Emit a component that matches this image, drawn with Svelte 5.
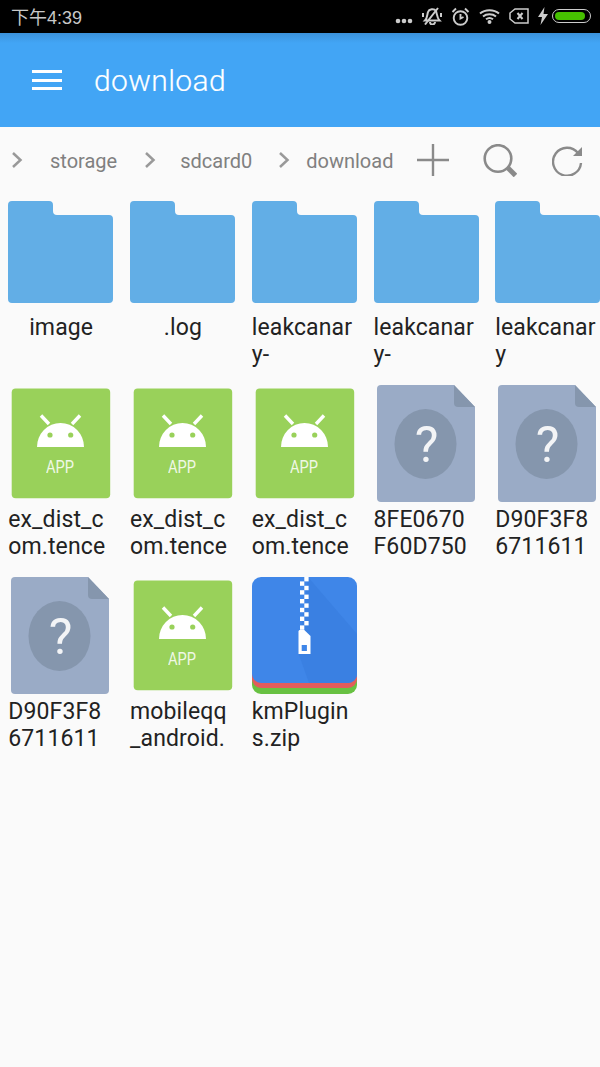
<script>
	const files = [
		{ type: 'folder', lines: ['image'] },
		{ type: 'folder', lines: ['.log'] },
		{ type: 'folder', lines: ['leakcanar', 'y-'] },
		{ type: 'folder', lines: ['leakcanar', 'y-'] },
		{ type: 'folder', lines: ['leakcanar', 'y'] },
		{ type: 'app', lines: ['ex_dist_c', 'om.tence'] },
		{ type: 'app', lines: ['ex_dist_c', 'om.tence'] },
		{ type: 'app', lines: ['ex_dist_c', 'om.tence'] },
		{ type: 'unknown', lines: ['8FE0670', 'F60D750'] },
		{ type: 'unknown', lines: ['D90F3F8', '6711611'] },
		{ type: 'unknown', lines: ['D90F3F8', '6711611'] },
		{ type: 'app', lines: ['mobileqq', '_android.'] },
		{ type: 'zip', lines: ['kmPlugin', 's.zip'] }
	];

	// zipper teeth, alternating right/left
	const teeth = Array.from({ length: 12 }, (_, i) => i);
</script>

{#snippet folderIcon()}
	<svg class="icon" viewBox="0 0 106 120">
		<path
			d="M4 9H41a4 4 0 0 1 4 4V19a4 4 0 0 0 4 4H101a4 4 0 0 1 4 4V107a4 4 0 0 1-4 4H4a4 4 0 0 1-4-4V13a4 4 0 0 1 4-4Z"
			fill="#62aee6"
		/>
	</svg>
{/snippet}

{#snippet appIcon()}
	<svg class="icon" viewBox="0 0 106 120">
		<rect x="3.7" y="4.6" width="98.5" height="109.6" rx="4" fill="#99d15a" />
		<path d="M29 63a23.500 24 0 0 1 47 0Z" fill="#fff" />
		<path d="M33 31.500L41 40M72 31.500L64 40" stroke="#fff" stroke-width="3.400" />
		<circle cx="42" cy="51" r="2.600" fill="#99d15a" />
		<circle cx="62.700" cy="51" r="2.600" fill="#99d15a" />
		<text x="52" y="88.500" class="app-text" textLength="28" lengthAdjust="spacingAndGlyphs">APP</text>
	</svg>
{/snippet}

{#snippet unknownIcon()}
	<svg class="icon" viewBox="0 0 106 120">
		<path d="M7 1H80L101 23V114a4 4 0 0 1-4 4H7a4 4 0 0 1-4-4V5a4 4 0 0 1 4-4Z" fill="#9aabc6" />
		<path d="M80 1L101 23H84a4 4 0 0 1-4-4Z" fill="#8596ad" />
		<ellipse cx="51.500" cy="60" rx="31" ry="35" fill="#8596ad" />
		<text x="52.500" y="77.500" class="question">?</text>
	</svg>
{/snippet}

{#snippet zipIcon()}
	<svg class="icon" viewBox="0 0 106 120">
		<path d="M0 20H105V109a9 9 0 0 1-9 9H9a9 9 0 0 1-9-9Z" fill="#68c142" />
		<path d="M0 20H105V103a9 9 0 0 1-9 9H9a9 9 0 0 1-9-9Z" fill="#e25c5c" />
		<path d="M9 1H96a9 9 0 0 1 9 9V98a9 9 0 0 1-9 9H9a9 9 0 0 1-9-9V10A9 9 0 0 1 9 1Z" fill="#3f86e8" />
		<path d="M56 1L105 58V98a9 9 0 0 1-9 9H57L46 76Z" fill="#3a80e2" />
		{#each teeth as i}
			<rect x={i % 2 ? 48 : 52.300} y={1 + i * 4.400} width="4.300" height="4.400" fill="#fff" />
		{/each}
		<path d="M47.500 54H52.300L58.500 60V78H46.500V55Z" fill="#fff" />
		<rect x="49.700" y="69" width="5.200" height="6" fill="#3f86e8" />
	</svg>
{/snippet}

{#snippet chevron()}
	<svg class="chevron" viewBox="0 0 12 18">
		<path d="M2 2L9.500 9L2 16" fill="none" stroke="#999" stroke-width="2.500" />
	</svg>
{/snippet}

<div class="screen">
	<header class="status">
		<span class="time">下午4:39</span>
		<div class="status-icons">
			<svg class="dots" width="18" height="6" viewBox="0 0 18 6">
				<circle cx="3" cy="3" r="2.300" fill="#ccc" />
				<circle cx="9" cy="3" r="2.300" fill="#ccc" />
				<circle cx="15" cy="3" r="2.300" fill="#ccc" />
			</svg>
			<svg width="20" height="18" viewBox="0 0 20 18" fill="none" stroke="#ccc" stroke-width="2">
				<path d="M3 13.500C5.500 11 5 8 6 5C7 2 12 1 14 4C15 7 15 11 17.500 13.500Z" />
				<path d="M8 15a2.500 2.500 0 0 0 5 0M3 17.500L16 1M1 6V10M19 6V10" />
			</svg>
			<svg width="19" height="19" viewBox="0 0 19 19" fill="none" stroke="#ccc" stroke-width="1.900">
				<circle cx="9.500" cy="11" r="6.800" />
				<path d="M9.500 7V11.500L12.500 10M1.500 5L5 1.500M17.500 5L14 1.500" />
			</svg>
			<svg width="21" height="16" viewBox="0 0 21 16" fill="none" stroke="#ccc" stroke-width="2">
				<path d="M1 5.500C6 1 15 1 20 5.500M4 8.500C7.500 5.500 13.500 5.500 17 8.500M7 11.300C9 9.800 12 9.800 14 11.300" />
				<circle cx="10.500" cy="14" r="1" fill="#ccc" />
			</svg>
			<svg width="20" height="16" viewBox="0 0 20 16" fill="none" stroke="#ccc" stroke-width="1.500">
				<path d="M6 1H19V15H6L1 11V5Z" />
				<path d="M8.500 5L13.500 11M13.500 5L8.500 11" stroke-width="2" />
			</svg>
			<svg width="10" height="18" viewBox="0 0 10 18">
				<path d="M6.500 0L0 10H4L2.500 18L10 7H5.500Z" fill="#ccc" />
			</svg>
			<div class="battery"><div class="battery-fill"></div></div>
		</div>
	</header>

	<div class="toolbar">
		<div class="menu"><span></span><span></span><span></span></div>
		<h1>download</h1>
	</div>

	<nav class="crumbs">
		<span class="first">{@render chevron()}</span>
		<span class="crumb storage">storage</span>
		{@render chevron()}
		<span class="crumb sdcard">sdcard0</span>
		{@render chevron()}
		<span class="crumb current">download</span>
		<svg class="plus" width="32" height="32" viewBox="0 0 32 32">
			<path d="M0 16H32M16 0V32" stroke="#8a8a8a" stroke-width="2.400" />
		</svg>
		<svg class="search" width="34" height="33" viewBox="0 0 34 33" fill="none" stroke="#8a8a8a">
			<circle cx="15" cy="14.500" r="13.300" stroke-width="2.600" />
			<path d="M25 24L32.500 31.500" stroke-width="5" />
		</svg>
		<svg class="refresh" width="32" height="31" viewBox="0 0 32 31" fill="none">
			<path d="M26 8A14 14 0 1 0 29 18" stroke="#8a8a8a" stroke-width="2.400" />
			<path d="M30 2V11H21Z" fill="#8a8a8a" />
		</svg>
	</nav>

	<main class="grid">
		{#each files as file}
			<div class="item">
				{#if file.type === 'folder'}
					{@render folderIcon()}
				{:else if file.type === 'app'}
					{@render appIcon()}
				{:else if file.type === 'unknown'}
					{@render unknownIcon()}
				{:else}
					{@render zipIcon()}
				{/if}
				<div class="label" class:single={file.lines.length === 1}>
					{#each file.lines as line}
						<div>{line}</div>
					{/each}
				</div>
			</div>
		{/each}
	</main>
</div>

<style>
	:global(body) {
		background: #fafafa;
	}

	.screen {
		width: 600px;
		height: 1067px;
		overflow: hidden;
		background: #fafafa;
		font-family: Roboto, 'Noto Sans CJK SC', sans-serif;
	}

	.status {
		height: 33px;
		background: #000;
		display: flex;
		align-items: center;
		justify-content: space-between;
		padding: 0 9px 1px 11px;
		box-sizing: border-box;
	}

	.time {
		color: #c8c8c8;
		font-size: 18px;
		font-family: 'Liberation Sans', 'Noto Sans CJK SC', sans-serif;
		padding-bottom: 1px;
	}

	.status-icons {
		display: flex;
		align-items: center;
		gap: 9px;
	}

	.dots {
		margin-top: 9px;
	}

	.battery {
		width: 39px;
		height: 14px;
		border: 1px solid #ccc;
		border-radius: 7px;
		padding: 2px;
		box-sizing: border-box;
		margin-left: -5px;
	}

	.battery-fill {
		height: 100%;
		width: 90%;
		background: #46c000;
		border-radius: 4px;
	}

	.toolbar {
		height: 94px;
		box-sizing: border-box;
		background: linear-gradient(#3b92da, #42a5f5 10px);
		display: flex;
		align-items: center;
		padding-left: 32px;
		gap: 32px;
	}

	.menu {
		width: 30px;
		display: flex;
		flex-direction: column;
		gap: 5.500px;
	}

	.menu span {
		height: 3px;
		background: #fff;
	}

	h1 {
		margin: 0;
		font-size: 30px;
		font-weight: 300;
		letter-spacing: 0.4px;
		color: #fff;
		-webkit-text-stroke: 0.2px #fff;
	}

	.crumbs {
		height: 66px;
		display: flex;
		align-items: center;
		padding-left: 11px;
		box-sizing: border-box;
	}

	.first {
		display: flex;
	}

	.chevron {
		width: 12px;
		height: 18px;
		flex: none;
	}

	.crumb {
		font-size: 20px;
		color: #808080;
		padding-top: 2px;
	}

	.storage {
		margin: 0 27px;
	}

	.sdcard {
		margin: 0 26px 0 24px;
	}

	.current {
		margin-left: 16px;
	}

	.plus {
		margin-left: 24px;
	}

	.search {
		margin-left: 34px;
	}

	.refresh {
		margin-left: 35px;
	}

	.grid {
		display: grid;
		grid-template-columns: repeat(5, 105.750px);
		grid-auto-rows: 192px;
		column-gap: 16px;
		padding-left: 8.250px;
		margin-top: -1px;
	}

	.icon {
		display: block;
		width: 106px;
		height: 120px;
	}

	.label {
		margin-top: 2px;
		font-size: 23px;
		letter-spacing: 0.12px;
		line-height: 27px;
		color: #222;
		white-space: nowrap;
	}

	.label.single {
		text-align: center;
	}

	.app-text {
		font-size: 18px;
		fill: #fff;
		opacity: 0.85;
		text-anchor: middle;
		font-family: Roboto, sans-serif;
	}

	.question {
		font-size: 50px;
		fill: #fff;
		opacity: 0.9;
		text-anchor: middle;
		font-family: Roboto, sans-serif;
	}
</style>
